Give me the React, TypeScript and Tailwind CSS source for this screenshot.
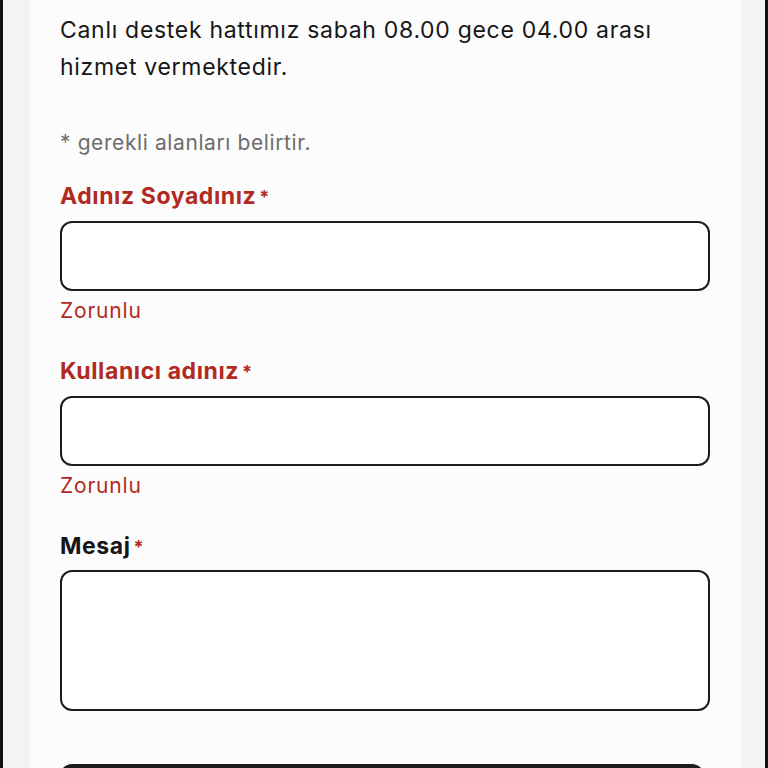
import React from "react";

const font = { fontFamily: "Inter, 'Liberation Sans', sans-serif" };

function Label({ text, red }: { text: string; red: boolean }) {
  return (
    <div
      className={`text-[23px] leading-[28px] font-bold tracking-[0.6px] ${
        red ? "text-[#b02a22]" : "text-[#161616]"
      }`}
    >
      {text}
      <span className="ml-[3px] text-[18px] text-[#b02a22] relative top-[-1px]">*</span>
    </div>
  );
}

function Field({ label, tall, error, first }: { label: string; tall?: boolean; error: boolean; first?: boolean }) {
  return (
    <div className={first ? "mt-[25px]" : "mt-[32px]"}>
      <Label text={label} red={error} />
      {tall ? (
        <textarea className="mt-[8px] block w-[650px] h-[141px] rounded-[12px] border-2 border-[#1c1c1c] bg-white resize-none" />
      ) : (
        <input className="mt-[9px] block w-[650px] h-[70px] rounded-[12px] border-2 border-[#1c1c1c] bg-white" />
      )}
      {error && (
        <div className="mt-[6px] text-[21px] leading-[28px] tracking-[0.8px] text-[#b02a22]">Zorunlu</div>
      )}
    </div>
  );
}

export default function App() {
  return (
    <div className="w-[768px] h-[768px] overflow-hidden bg-[#111] flex" style={font}>
      <div className="ml-[3px] w-[762px] h-full bg-[#f2f3f3] flex">
        <div className="ml-[27px] w-[707px] h-full bg-[#fcfcfc] pl-[30px] pt-[12px] shrink-0">
          <p className="text-[23px] leading-[37px] text-[#161616] tracking-[0.7px]">
            Canlı destek hattımız sabah 08.00 gece 04.00 arası
            <br />
            hizmet vermektedir.
          </p>
          <p className="mt-[43px] text-[21px] leading-[28px] tracking-[0.6px] text-[#6d6d6d]">
            * gerekli alanları belirtir.
          </p>
          <Field label="Adınız Soyadınız" error first />
          <Field label="Kullanıcı adınız" error />
          <Field label="Mesaj" tall error={false} />
          <div className="mt-[53px] w-[644px] h-[60px] rounded-[12px] bg-[#1c1c1c]" />
        </div>
        <div className="w-[5px] h-full bg-[#f8f9f9] shrink-0" />
      </div>
    </div>
  );
}
